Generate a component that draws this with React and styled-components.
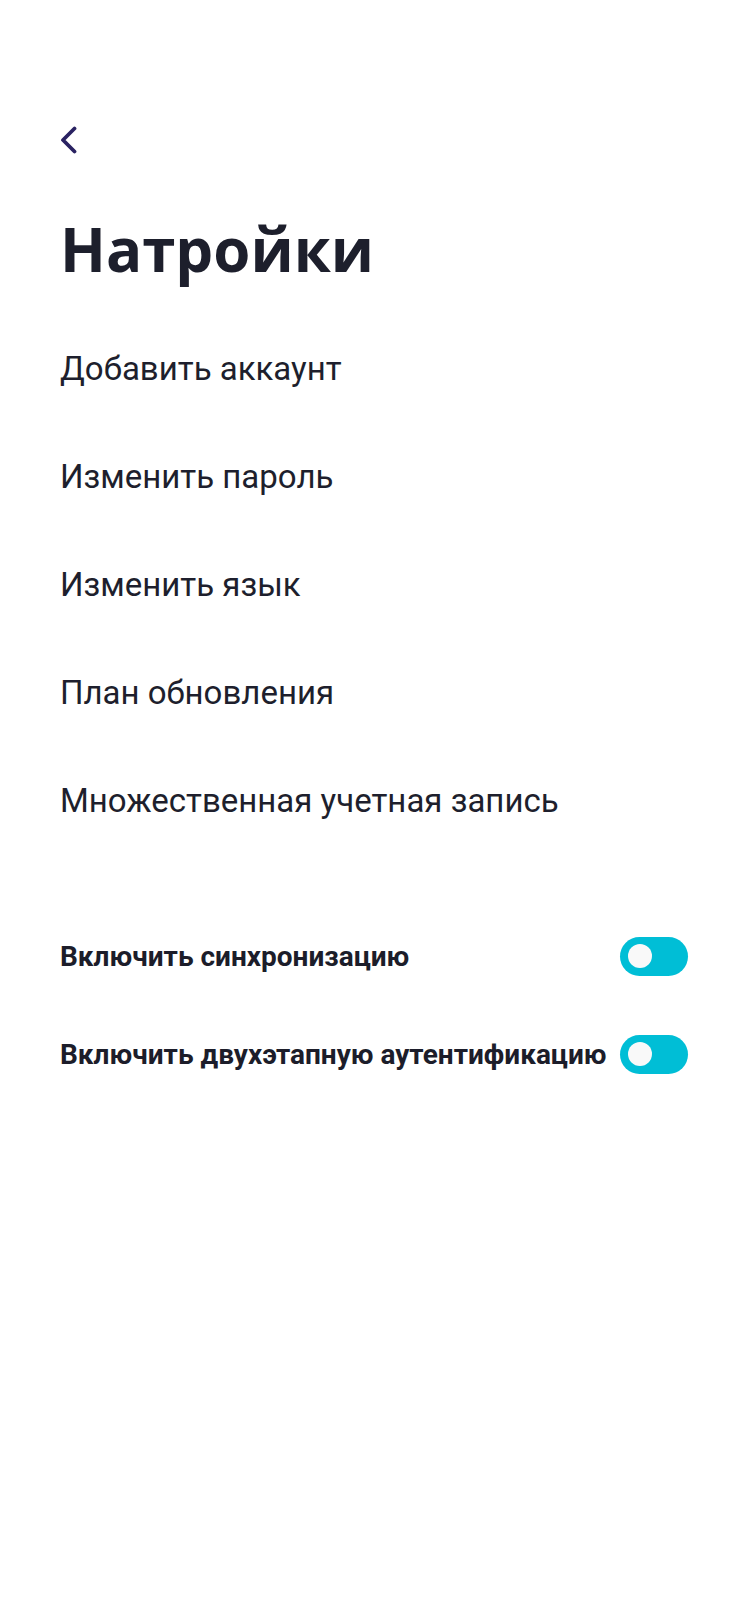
import React, { useState } from "react";
import styled, { createGlobalStyle } from "styled-components";

const Global = createGlobalStyle`
  * { box-sizing: border-box; }
  html, body { margin: 0; padding: 0; background: #ffffff; }
  body { font-family: Roboto, "Noto Sans", sans-serif; -webkit-font-smoothing: antialiased; }
`;

const Screen = styled.div`
  width: 750px;
  min-height: 1624px;
  background: #ffffff;
  padding: 126px 62px 0 60px;
  display: flex;
  flex-direction: column;
`;

const BackButton = styled.button`
  width: 18px;
  height: 28px;
  padding: 0;
  margin: 0;
  border: none;
  background: transparent;
  display: flex;
  align-items: center;
  justify-content: flex-start;
  cursor: pointer;
`;

const Title = styled.h1`
  margin: 65px 0 0 0;
  font-family: "Open Sans", "Noto Sans", sans-serif;
  font-weight: 700;
  font-size: 60px;
  line-height: 60px;
  color: #1d1f2c;
  letter-spacing: 0;
`;

const MenuList = styled.nav`
  margin-top: 35px;
  display: flex;
  flex-direction: column;
`;

const MenuItem = styled.a`
  height: 108px;
  display: flex;
  align-items: center;
  font-family: Roboto, sans-serif;
  font-size: 33px;
  font-weight: 400;
  color: #1e1f2d;
  text-decoration: none;
`;

const ToggleList = styled.div`
  margin-top: 53px;
  display: flex;
  flex-direction: column;
`;

const ToggleRow = styled.label`
  height: 98px;
  display: flex;
  align-items: center;
  justify-content: space-between;
  gap: 10px;
`;

const ToggleLabel = styled.span`
  font-family: Roboto, sans-serif;
  font-weight: 700;
  font-size: 28px;
  color: #1c1d2a;
  white-space: nowrap;
`;

const Switch = styled.button`
  position: relative;
  flex: 0 0 auto;
  width: 68px;
  height: 39px;
  border-radius: 20px;
  border: none;
  padding: 0;
  background: #00bed6;
  cursor: pointer;
`;

const Knob = styled.span`
  position: absolute;
  top: 7.5px;
  left: ${(p) => (p.$on ? "36px" : "8px")};
  width: 24px;
  height: 24px;
  border-radius: 50%;
  background: #f9f9f9;
`;

const ChevronLeft = () => (
  <svg width="18" height="28" viewBox="0 0 18 28" fill="none">
    <polyline
      points="14.5,2.5 3,14 14.5,25.5"
      stroke="#2a2262"
      strokeWidth="3.8"
      strokeLinecap="round"
      strokeLinejoin="round"
    />
  </svg>
);

const menu = [
  "Добавить аккаунт",
  "Изменить пароль",
  "Изменить язык",
  "План обновления",
  "Множественная учетная запись",
];

const toggles = [
  "Включить синхронизацию",
  "Включить двухэтапную аутентификацию",
];

export default function App() {
  const [state, setState] = useState([false, false]);
  return (
    <>
      <Global />
      <Screen>
        <BackButton aria-label="Назад">
          <ChevronLeft />
        </BackButton>
        <Title>Натройки</Title>
        <MenuList>
          {menu.map((m) => (
            <MenuItem key={m}>{m}</MenuItem>
          ))}
        </MenuList>
        <ToggleList>
          {toggles.map((t, i) => (
            <ToggleRow key={t}>
              <ToggleLabel>{t}</ToggleLabel>
              <Switch
                type="button"
                onClick={() =>
                  setState((s) => s.map((v, j) => (j === i ? !v : v)))
                }
              >
                <Knob $on={state[i]} />
              </Switch>
            </ToggleRow>
          ))}
        </ToggleList>
      </Screen>
    </>
  );
}
